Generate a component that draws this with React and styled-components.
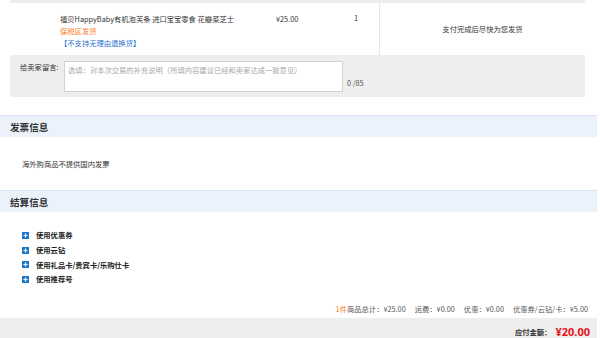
import React from 'react';
import styled, { createGlobalStyle } from 'styled-components';

const Global = createGlobalStyle`
  html, body {
    margin: 0;
    padding: 0;
    background: #fff;
  }
  body {
    font-family: "Noto Sans CJK SC", "Noto Sans", sans-serif;
    font-size: 7.3px;
    color: #333;
  }
`;

const Page = styled.div`
  width: 600px;
  height: 338px;
  overflow: hidden;
`;

const OrderBox = styled.div`
  margin-left: 10px;
  width: 575px;
`;

const TopStrip = styled.div`
  height: 3px;
  background: #eeeeee;
`;

const ProductRow = styled.div`
  display: flex;
  height: 52px;
  background: #fff;
`;

const ProductCell = styled.div`
  width: 369px;
  display: flex;
  padding: 10px 0 0 50px;
  box-sizing: border-box;
`;

const ProductInfo = styled.div`
  width: 216px;
  line-height: 12px;
`;

const Title = styled.div`
  white-space: nowrap;
`;

const Bonded = styled.div`
  color: #ff7a1a;
`;

const NoReturn = styled.div`
  color: #1f6fd1;
`;

const Price = styled.div`
  width: 78px;
  line-height: 12px;
`;

const Qty = styled.div`
  line-height: 10px;
`;

const DeliveryCell = styled.div`
  flex: 1;
  border-left: 1px solid #e6e6e6;
  display: flex;
  align-items: center;
  justify-content: center;
`;

const MessageRow = styled.div`
  height: 42px;
  background: #eeeeee;
  display: flex;
  align-items: flex-start;
  padding: 6px 0 0 10px;
  box-sizing: border-box;
`;

const MsgLabel = styled.div`
  width: 44px;
  line-height: 12px;
  padding-top: 0;
`;

const MsgInput = styled.textarea`
  width: 279px;
  height: 31px;
  box-sizing: border-box;
  border: 1px solid #d2d2d2;
  background: #fff;
  font-family: inherit;
  font-size: 7.3px;
  padding: 3px 3px;
  resize: none;
  outline: none;
  margin: 0;
  &::placeholder {
    color: #a8a8a8;
  }
`;

const Counter = styled.div`
  align-self: flex-end;
  margin: 0 0 9px 4px;
  color: #555;
`;

const SectionHead = styled.div`
  width: 597px;
  height: 22px;
  box-sizing: border-box;
  margin-top: ${p => p.$gap}px;
  border-top: 1px solid #d7e4f7;
  background: #ecf2fc;
  display: flex;
  align-items: center;
  padding-left: 10px;
  font-size: 9.6px;
  font-weight: bold;
  color: #333;
`;

const InvoiceBody = styled.div`
  height: 53px;
  display: flex;
  align-items: center;
  padding-left: 22px;
`;

const OptionList = styled.ul`
  list-style: none;
  margin: 0;
  padding: 16px 0 0 22px;
  height: 91px;
  box-sizing: border-box;
`;

const Option = styled.li`
  display: flex;
  align-items: center;
  gap: 7px;
  height: 14.7px;
  font-weight: bold;
  color: #222;
`;

const Summary = styled.div`
  width: 588px;
  display: flex;
  justify-content: flex-end;
  gap: 9px;
  color: #555;
  line-height: 12px;
`;

const Count = styled.span`
  color: #ff7a1a;
`;

const PayBar = styled.div`
  margin-top: 3px;
  width: 597px;
  height: 24px;
  background: #eeeeee;
  display: flex;
  justify-content: flex-end;
  align-items: center;
  padding: 3px 7px 0 0;
  box-sizing: border-box;
  font-weight: bold;
  color: #333;
`;

const Total = styled.span`
  color: #e4141b;
  font-size: 11px;
  margin-left: 4px;
  font-family: "Open Sans", "Noto Sans", sans-serif;
`;

const PlusIcon = () => (
  <svg width="7" height="7" viewBox="0 0 7 7">
    <rect width="7" height="7" fill="#1a78c9" />
    <path d="M3.5 1.5v4M1.5 3.5h4" stroke="#fff" strokeWidth="1.2" />
  </svg>
);

const options = ['使用优惠券', '使用云钻', '使用礼品卡/贵宾卡/乐购仕卡', '使用推荐号'];

export default function App() {
  return (
    <Page>
      <Global />
      <OrderBox>
        <TopStrip />
        <ProductRow>
          <ProductCell>
            <ProductInfo>
              <Title>福贝HappyBaby有机泡芙条 进口宝宝零食 花瓣菜芝士</Title>
              <Bonded>保税区发货</Bonded>
              <NoReturn>【不支持无理由退换货】</NoReturn>
            </ProductInfo>
            <Price>¥25.00</Price>
            <Qty>1</Qty>
          </ProductCell>
          <DeliveryCell>支付完成后尽快为您发货</DeliveryCell>
        </ProductRow>
        <MessageRow>
          <MsgLabel>给卖家留言:</MsgLabel>
          <MsgInput placeholder="选填：对本次交易的补充说明（所填内容建议已经和卖家达成一致意见）" />
          <Counter>0 /85</Counter>
        </MessageRow>
      </OrderBox>

      <SectionHead $gap={18}>发票信息</SectionHead>
      <InvoiceBody>海外购商品不提供国内发票</InvoiceBody>

      <SectionHead $gap={0}>结算信息</SectionHead>
      <OptionList>
        {options.map(o => (
          <Option key={o}>
            <PlusIcon />
            {o}
          </Option>
        ))}
      </OptionList>

      <Summary>
        <span><Count>1件</Count>商品总计：¥25.00</span>
        <span>运费：¥0.00</span>
        <span>优惠：¥0.00</span>
        <span>优惠券/云钻/卡：¥5.00</span>
      </Summary>
      <PayBar>
        应付金额：<Total>¥20.00</Total>
      </PayBar>
    </Page>
  );
}
